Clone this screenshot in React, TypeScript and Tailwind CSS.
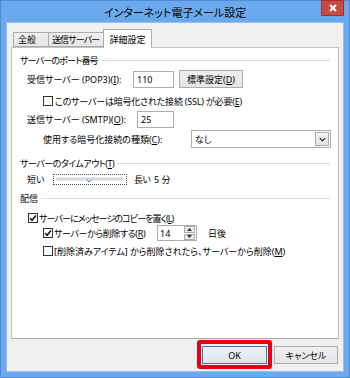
import type { ReactNode } from "react";

function Key({ k }: { k: string }) {
  return (
    <>
      (<span className="underline underline-offset-[1px]">{k}</span>)
    </>
  );
}

function Check({ checked }: { checked?: boolean }) {
  return (
    <span className="w-[10px] h-[10px] border border-[#333] bg-white flex items-center justify-center shrink-0">
      {checked && (
        <svg width="8" height="8" viewBox="0 0 8 8">
          <path d="M1 4.2 L3 6.3 L7 1.5" stroke="#111" strokeWidth="1.5" fill="none" />
        </svg>
      )}
    </span>
  );
}

function GroupHeader({ children, className }: { children: ReactNode; className: string }) {
  return (
    <div className={`h-[14px] flex items-center pl-[8px] pr-[8px] ${className}`}>
      <span className="whitespace-nowrap">{children}</span>
      <div className="flex-1 h-px bg-[#d5dfe5] ml-[3px]" />
    </div>
  );
}

function TextBox({ value, className }: { value: string; className: string }) {
  return (
    <div className={`border border-[#abadb3] bg-white flex items-center pl-[3px] ${className}`}>{value}</div>
  );
}

export default function App() {
  return (
    <div className="w-[350px] h-[378px] bg-[#6ba9ec] border border-[#4f8ad6] flex flex-col text-black text-[9px] leading-none font-['Noto_Sans','Noto_Sans_CJK_JP',sans-serif] [font-feature-settings:'palt']">
      {/* title bar */}
      <div className="h-[21px] relative flex items-center justify-center text-[11px] pt-[2px] whitespace-nowrap">
        インターネット電子メール設定
        <div className="absolute right-[5px] -top-px w-[23px] h-[16px] bg-[#c74b48] border border-[#a8302d] flex items-center justify-center">
          <svg width="8" height="8" viewBox="0 0 8 8">
            <path d="M1 1 L7 7 M7 1 L1 7" stroke="#fff" strokeWidth="2" />
          </svg>
        </div>
      </div>

      {/* client */}
      <div className="flex-1 mx-[5px] mb-[5px] bg-[#f0f0f0] border border-[#93c1f0] flex flex-col">
        {/* tabs */}
        <div className="mt-[6px] h-[18px] pl-[6px] flex items-end whitespace-nowrap">
          <div className="w-[36px] h-[15px] border border-[#acacac] bg-gradient-to-b from-[#f0f0f0] to-[#e5e5e5] flex items-center pl-[4px]">
            全般
          </div>
          <div className="w-[56px] h-[15px] -ml-px border border-[#acacac] bg-gradient-to-b from-[#f0f0f0] to-[#e5e5e5] flex items-center pl-[3px] tracking-[-0.9px]">
            送信サーバー
          </div>
          <div className="w-[49px] h-[19px] -ml-px -mb-px relative z-10 border border-b-0 border-[#acacac] bg-white flex items-center justify-center">
            詳細設定
          </div>
        </div>

        {/* panel */}
        <div className="mx-[4px] h-[292px] bg-white border border-[#c3c3c3] border-b-[#a9a9a9] flex flex-col pt-[5px] whitespace-nowrap">
          <GroupHeader className="tracking-[-0.8px]">サーバーのポート番号</GroupHeader>

          <div className="mt-[3px] h-[18px] flex items-center pl-[15px]">
            <span className="w-[106px]">
              受信サーバー (POP3)<Key k="I" />:
            </span>
            <TextBox value="110" className="w-[41px] h-[17px]" />
            <div className="ml-[5px] w-[64px] h-[18px] border border-[#acacac] bg-gradient-to-b from-[#f0f0f0] to-[#e5e5e5] flex items-center justify-center">
              標準設定<Key k="D" />
            </div>
          </div>

          <div className="mt-[5px] h-[16px] flex items-center pl-[31px] gap-[2px]">
            <Check />
            <span className="tracking-[-0.2px]">
              このサーバーは暗号化された接続 (SSL) が必要<Key k="E" />
            </span>
          </div>

          <div className="mt-[1px] h-[18px] flex items-center pl-[15px]">
            <span className="w-[110px]">
              送信サーバー (SMTP)<Key k="O" />:
            </span>
            <TextBox value="25" className="w-[37px] h-[17px]" />
          </div>

          <div className="mt-[2px] h-[18px] flex items-center pl-[31px]">
            <span className="w-[148px]">
              使用する暗号化接続の種類<Key k="C" />:
            </span>
            <div className="w-[140px] h-[18px] border border-[#acacac] bg-white flex items-center">
              <span className="flex-1 pl-[3px]">なし</span>
              <div className="w-[14px] h-[14px] mr-px border border-[#acacac] bg-gradient-to-b from-[#f5f5f5] to-[#e3e3e3] flex items-center justify-center">
                <svg width="7" height="5" viewBox="0 0 7 5">
                  <path d="M0.8 1 L3.5 3.8 L6.2 1" stroke="#333" strokeWidth="1.2" fill="none" />
                </svg>
              </div>
            </div>
          </div>

          <GroupHeader className="mt-[8px] tracking-[-0.5px]">
            サーバーのタイムアウト<Key k="T" />
          </GroupHeader>

          <div className="mt-[1px] h-[16px] flex items-center pl-[15px]">
            <span className="w-[26px]">短い</span>
            <div className="w-[74px] h-[11px] border border-dotted border-[#555]">
              <svg width="72" height="9" viewBox="0 0 72 9">
                <rect x="3" y="3" width="66" height="2" fill="#e7eaea" stroke="#c5c5c5" strokeWidth="0.8" />
                <path d="M32.5 4.5 L35 7 L37.5 4.5" stroke="#3c7fb1" strokeWidth="1" fill="none" />
              </svg>
            </div>
            <span className="ml-[7px] w-[19px] shrink-0 tracking-[-0.6px]">長い</span>
            <span className="ml-[1px]">5 分</span>
          </div>

          <GroupHeader className="mt-[4px]">配信</GroupHeader>

          <div className="mt-[6px] h-[14px] flex items-center pl-[16px] gap-[1px]">
            <Check checked />
            <span className="tracking-[-0.9px]">
              サーバーにメッセージのコピーを置く<Key k="L" />
            </span>
          </div>

          <div className="h-[16px] flex items-center pl-[31px]">
            <Check checked />
            <span className="ml-[1px] w-[103px] tracking-[-0.4px]">
              サーバーから削除する<Key k="R" />
            </span>
            <div className="w-[40px] h-[16px] border border-[#abadb3] bg-white flex items-center">
              <span className="flex-1 pl-[2px]">14</span>
              <div className="w-[11px] h-[14px] mr-px flex flex-col gap-px">
                <div className="flex-1 border border-[#acacac] bg-[#ececec] flex items-center justify-center">
                  <svg width="5" height="3" viewBox="0 0 5 3">
                    <path d="M0 3 L2.5 0 L5 3 Z" fill="#333" />
                  </svg>
                </div>
                <div className="flex-1 border border-[#acacac] bg-[#ececec] flex items-center justify-center">
                  <svg width="5" height="3" viewBox="0 0 5 3">
                    <path d="M0 0 L2.5 3 L5 0 Z" fill="#333" />
                  </svg>
                </div>
              </div>
            </div>
            <span className="ml-[11px]">日後</span>
          </div>

          <div className="mt-[3px] h-[14px] flex items-center pl-[31px] gap-[1px]">
            <Check />
            <span>
              [削除済みアイテム] から削除されたら、サーバーから削除<Key k="M" />
            </span>
          </div>
        </div>

        {/* buttons */}
        <div className="mt-[7px] h-[18px] flex justify-end gap-[7px] pr-[5px]">
          <div className="relative w-[65px] h-[18px]">
            <div className="w-full h-full border border-[#3d7bad] bg-gradient-to-b from-[#edf2f7] to-[#dde6ee] flex items-center justify-center">
              OK
            </div>
            <span className="absolute -top-[6px] -bottom-[5px] -left-[5px] -right-[5px] border-[4px] border-[#e60012] rounded-[3px]" />
          </div>
          <div className="w-[64px] h-[18px] border border-[#acacac] bg-gradient-to-b from-[#f0f0f0] to-[#e5e5e5] flex items-center justify-center">
            キャンセル
          </div>
        </div>
      </div>
    </div>
  );
}
